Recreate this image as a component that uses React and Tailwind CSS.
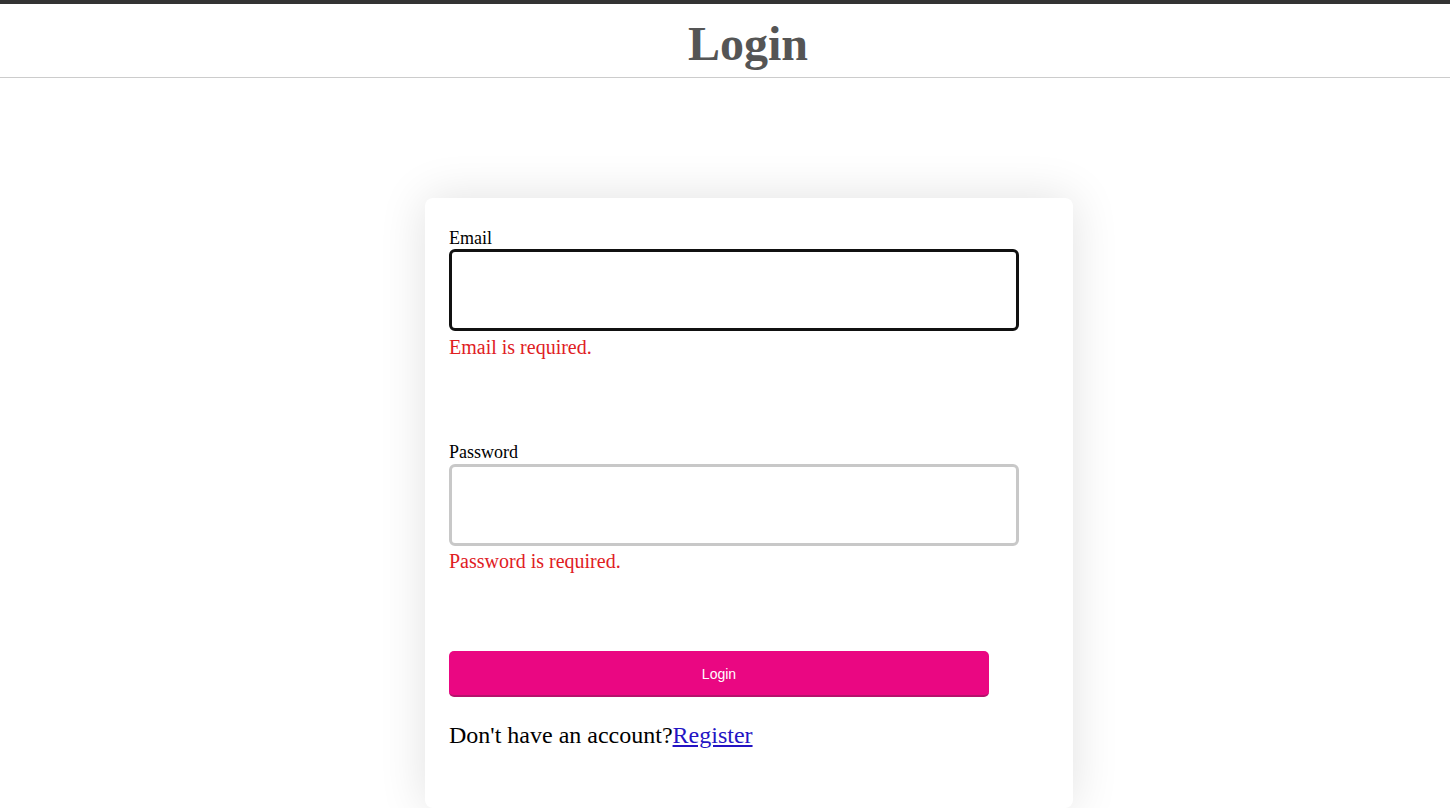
export default function App() {
  return (
    <div className="min-h-screen bg-white font-['Liberation_Serif',serif] text-black">
      <header className="border-t-4 border-t-[#333] border-b border-b-[#cccccc]">
        <h1 className="h-[73px] pt-[16px] pl-[46px] text-center text-[48px] leading-[48px] font-bold text-[#555]">
          Login
        </h1>
      </header>

      <div className="pt-[120px]">
        <div className="ml-[425px] w-[648px] rounded-lg bg-white pl-6 pr-[54px] pt-[30px] pb-[59px] shadow-[0_0_48px_rgba(0,0,0,0.12)]">
          <label className="block text-[18px] leading-[20px]">Email</label>
          <input
            type="email"
            className="mt-px block h-[82px] w-[570px] rounded-md border-[3px] border-[#111] outline-none"
          />
          <p className="mt-[5px] text-[20px] leading-[23px] text-[#e0201f]">
            Email is required.
          </p>

          <label className="mt-[83px] block text-[18px] leading-[20px]">
            Password
          </label>
          <input
            type="password"
            className="mt-[2px] block h-[82px] w-[570px] rounded-md border-[3px] border-[#c8c8c8] outline-none"
          />
          <p className="mt-[4px] text-[20px] leading-[23px] text-[#e0201f]">
            Password is required.
          </p>

          <button className="mt-[78px] block h-[46px] w-[540px] rounded-[5px] border-b-2 border-b-[#b5126c] bg-[#ea0782] pt-[2px] font-['Liberation_Sans',sans-serif] text-[14px] text-white">
            Login
          </button>

          <p className="mt-[24px] text-[24px] leading-[28px]">
            Don't have an account?
            <a href="#" className="text-[#2414c4] underline">
              Register
            </a>
          </p>
        </div>
      </div>
    </div>
  );
}
